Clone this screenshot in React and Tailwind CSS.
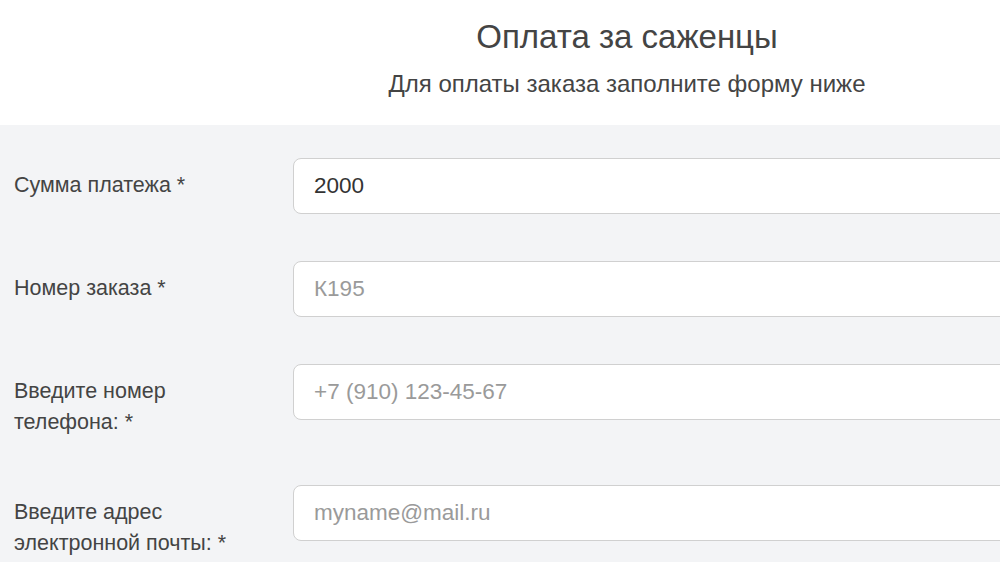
import React from 'react';

const FIELDS = [
  { label: 'Сумма платежа *', value: '2000', placeholder: '' },
  { label: 'Номер заказа *', value: '', placeholder: 'К195' },
  { label: 'Введите номер телефона: *', value: '', placeholder: '+7 (910) 123-45-67' },
  { label: 'Введите адрес электронной почты: *', value: '', placeholder: 'myname@mail.ru' },
];

const App = () => {
  return (
    <div className="w-[1000px] h-[562px] overflow-hidden bg-white font-['Liberation_Sans',Arial,sans-serif] text-[#444]">
      <div className="h-[125px] pl-[254px] pt-[16px] text-center">
        <h1 className="text-[33px] leading-[42px] text-[#444]">Оплата за саженцы</h1>
        <p className="mt-[12px] text-[24px] leading-[28px] text-[#444]">Для оплаты заказа заполните форму ниже</p>
      </div>

      {/* Форма */}
      <div className="bg-[#f3f4f6] h-full pt-[33px] pl-[14px]">
        {FIELDS.map(f => (
          <div key={f.label} className="flex items-start mb-[47px]">
            <label className="w-[279px] shrink-0 pr-[29px] pt-3 text-[21.5px] leading-[31px] text-[#444]">
              {f.label}
            </label>
            <input
              type="text"
              readOnly
              value={f.value}
              placeholder={f.placeholder}
              className="w-[800px] h-[56px] shrink-0 bg-white border border-[#d0d0d0] rounded-[8px] px-[20px] text-[22.5px] text-[#333] placeholder:text-[#9a9a9a] outline-none"
            />
          </div>
        ))}
      </div>
    </div>
  );
};

export default App;
